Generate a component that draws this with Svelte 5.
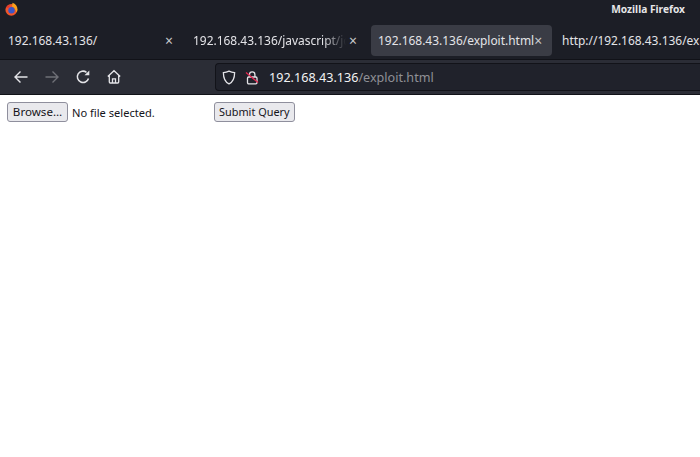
<script>
	const tabs = [
		{ title: '192.168.43.136/', close: true },
		{ title: '192.168.43.136/javascript/jquery', close: true, fade: true },
		{ title: '192.168.43.136/exploit.html', close: true, active: true },
		{ title: 'http://192.168.43.136/exploit.html', close: false }
	];
</script>

<div class="browser">
	<header class="titlebar">
		<svg class="logo" width="13" height="14" viewBox="0 0 13 14">
			<circle cx="6.300" cy="7.800" r="5.900" fill="#f0562a" />
			<path d="M7.500 .8c3 1 5 3.700 5 6.700 0 1-.3 2-.8 3-1-3-2.700-5-4.700-6z" fill="#fba11b" />
			<circle cx="6.500" cy="8.200" r="3.200" fill="#3a56c8" />
			<path d="M1 6c1-2 2.500-3 4-3L4 5.500z" fill="#e6322e" />
		</svg>
		<span class="wintitle">Mozilla Firefox</span>
	</header>

	<nav class="tabstrip">
		{#each tabs as tab}
			<div class="tab" class:active={tab.active} class:last={!tab.close} class:middle={tab.fade}>
				<span class="tabtitle" class:fade={tab.fade}>{tab.title}</span>
				{#if tab.close}
					<span class="close">×</span>
				{/if}
			</div>
		{/each}
	</nav>

	<div class="toolbar">
		<div class="navbtns">
			<svg width="16" height="16" viewBox="0 0 16 16" fill="none" stroke="#e4e4e8" stroke-width="1.400">
				<path d="M14.500 8H2M7.500 2.500 2 8l5.500 5.500" />
			</svg>
			<svg width="16" height="16" viewBox="0 0 16 16" fill="none" stroke="#6f7077" stroke-width="1.400">
				<path d="M1.500 8H14M8.500 2.500 14 8l-5.500 5.500" />
			</svg>
			<svg width="16" height="16" viewBox="0 0 16 16" fill="none" stroke="#e4e4e8" stroke-width="1.500">
				<path d="M13.500 9.500A5.700 5.700 0 1 1 11.500 3.300" />
				<path d="M9.500 6.300h4.800V1.500z" fill="#e4e4e8" stroke="none" />
			</svg>
			<svg width="16" height="16" viewBox="0 0 16 16" fill="none" stroke="#e4e4e8" stroke-width="1.300">
				<path d="M1.800 7.500 8 1.700l6.200 5.800M3.300 6.500V13a1 1 0 0 0 1 1h7.400a1 1 0 0 0 1-1V6.500M6.500 14V9.800h3V14" />
			</svg>
		</div>
		<div class="urlbar">
			<svg width="14" height="15" viewBox="0 0 14 15" fill="none" stroke="#e4e4e8" stroke-width="1.300">
				<path d="M7 1.200c2 1 3.800 1.400 5.600 1.500 0 5-1.600 9.300-5.600 11.200C3 12 1.400 7.700 1.400 2.700 3.200 2.600 5 2.200 7 1.200z" />
			</svg>
			<svg class="lock" width="14" height="15" viewBox="0 0 14 15" fill="none">
				<rect x="2.500" y="7" width="9.500" height="6.800" rx="1.200" stroke="#e4e4e8" stroke-width="1.300" />
				<path d="M4.500 7V4.500a2.700 2.700 0 0 1 5.400 0V7" stroke="#e4e4e8" stroke-width="1.300" />
				<path d="M1 2.500l12 10" stroke="#e22850" stroke-width="1.300" />
			</svg>
			<span class="url"><b>192.168.43.136</b>/exploit.html</span>
		</div>
	</div>

	<main class="page">
		<form class="upload">
			<div class="filefield">
				<button type="button" class="browse">Browse…</button>
				<span class="filename">No file selected.</span>
			</div>
			<button type="button" class="submit">Submit Query</button>
		</form>
	</main>
</div>

<style>
	:global(body) {
		margin: 0;
		background: #fff;
	}

	.browser {
		width: 700px;
		height: 457px;
		overflow: hidden;
		display: flex;
		flex-direction: column;
		font-family: "Noto Sans", sans-serif;
	}

	.titlebar {
		height: 17px;
		flex: none;
		background: #1c1e26;
		display: flex;
		align-items: center;
		justify-content: space-between;
		padding: 1px 15px 0 5px;
		box-sizing: border-box;
	}

	.wintitle {
		color: #e6e6e8;
		font-size: 10.200px;
		font-weight: 700;
	}

	.tabstrip {
		height: 42px;
		flex: none;
		box-sizing: border-box;
		padding-bottom: 3px;
		background: #1c1e26;
		display: flex;
		align-items: flex-end;
		overflow: hidden;
	}

	.tab {
		width: 185px;
		height: 31px;
		flex: none;
		box-sizing: border-box;
		padding: 0 12px 0 8px;
		display: flex;
		align-items: center;
		justify-content: space-between;
		color: #e4e4e8;
		font-size: 11.950px;
		border-radius: 4px;
		white-space: nowrap;
	}

	.middle {
		padding-right: 13px;
	}

	.active {
		background: #3a3c45;
		width: 181px;
		margin: 0 2px 0 1px;
		padding: 0 10px 0 7px;
	}

	.last {
		width: 150px;
	}

	.tabtitle {
		flex: 0 1 auto;
	}

	.fade {
		width: 153px;
		overflow: hidden;
		-webkit-mask-image: linear-gradient(to right, #000 85%, transparent);
		mask-image: linear-gradient(to right, #000 85%, transparent);
	}

	.close {
		color: #c8c8cc;
		font-size: 14px;
		line-height: 1;
	}

	.toolbar {
		height: 36px;
		flex: none;
		background: #2b2d36;
		border-top: 1px solid #111218;
		border-bottom: 1px solid #111218;
		box-sizing: border-box;
		display: flex;
		align-items: center;
		padding: 0 0 0 13px;
	}

	.navbtns {
		display: flex;
		gap: 15px;
		width: 202px;
		flex: none;
	}

	.urlbar {
		flex: 1;
		height: 28px;
		background: #20222b;
		border: 1px solid #121319;
		border-right: none;
		border-radius: 4px 0 0 4px;
		display: flex;
		align-items: center;
		gap: 9px;
		padding-left: 6px;
		box-sizing: border-box;
	}

	.url {
		color: #8f9096;
		font-size: 12.600px;
		margin-left: 1px;
	}

	.url b {
		color: #f2f2f4;
		font-weight: 400;
	}

	.page {
		flex: 1;
		background: #fff;
		padding: 7px;
	}

	.upload {
		display: flex;
		align-items: center;
	}

	.filefield {
		width: 207px;
		display: flex;
		align-items: center;
		gap: 4px;
		flex: none;
	}

	.filename {
		font-size: 11.100px;
		color: #15141a;
	}

	.browse,
	.submit {
		font-family: inherit;
		font-size: 10.900px;
		color: #15141a;
		background: #e9e9ed;
		border: 1px solid #8f8f9d;
		border-radius: 3px;
		height: 20px;
		padding: 0 4px 1px;
	}

	.browse {
		font-size: 11.600px;
		width: 61px;
	}
</style>
